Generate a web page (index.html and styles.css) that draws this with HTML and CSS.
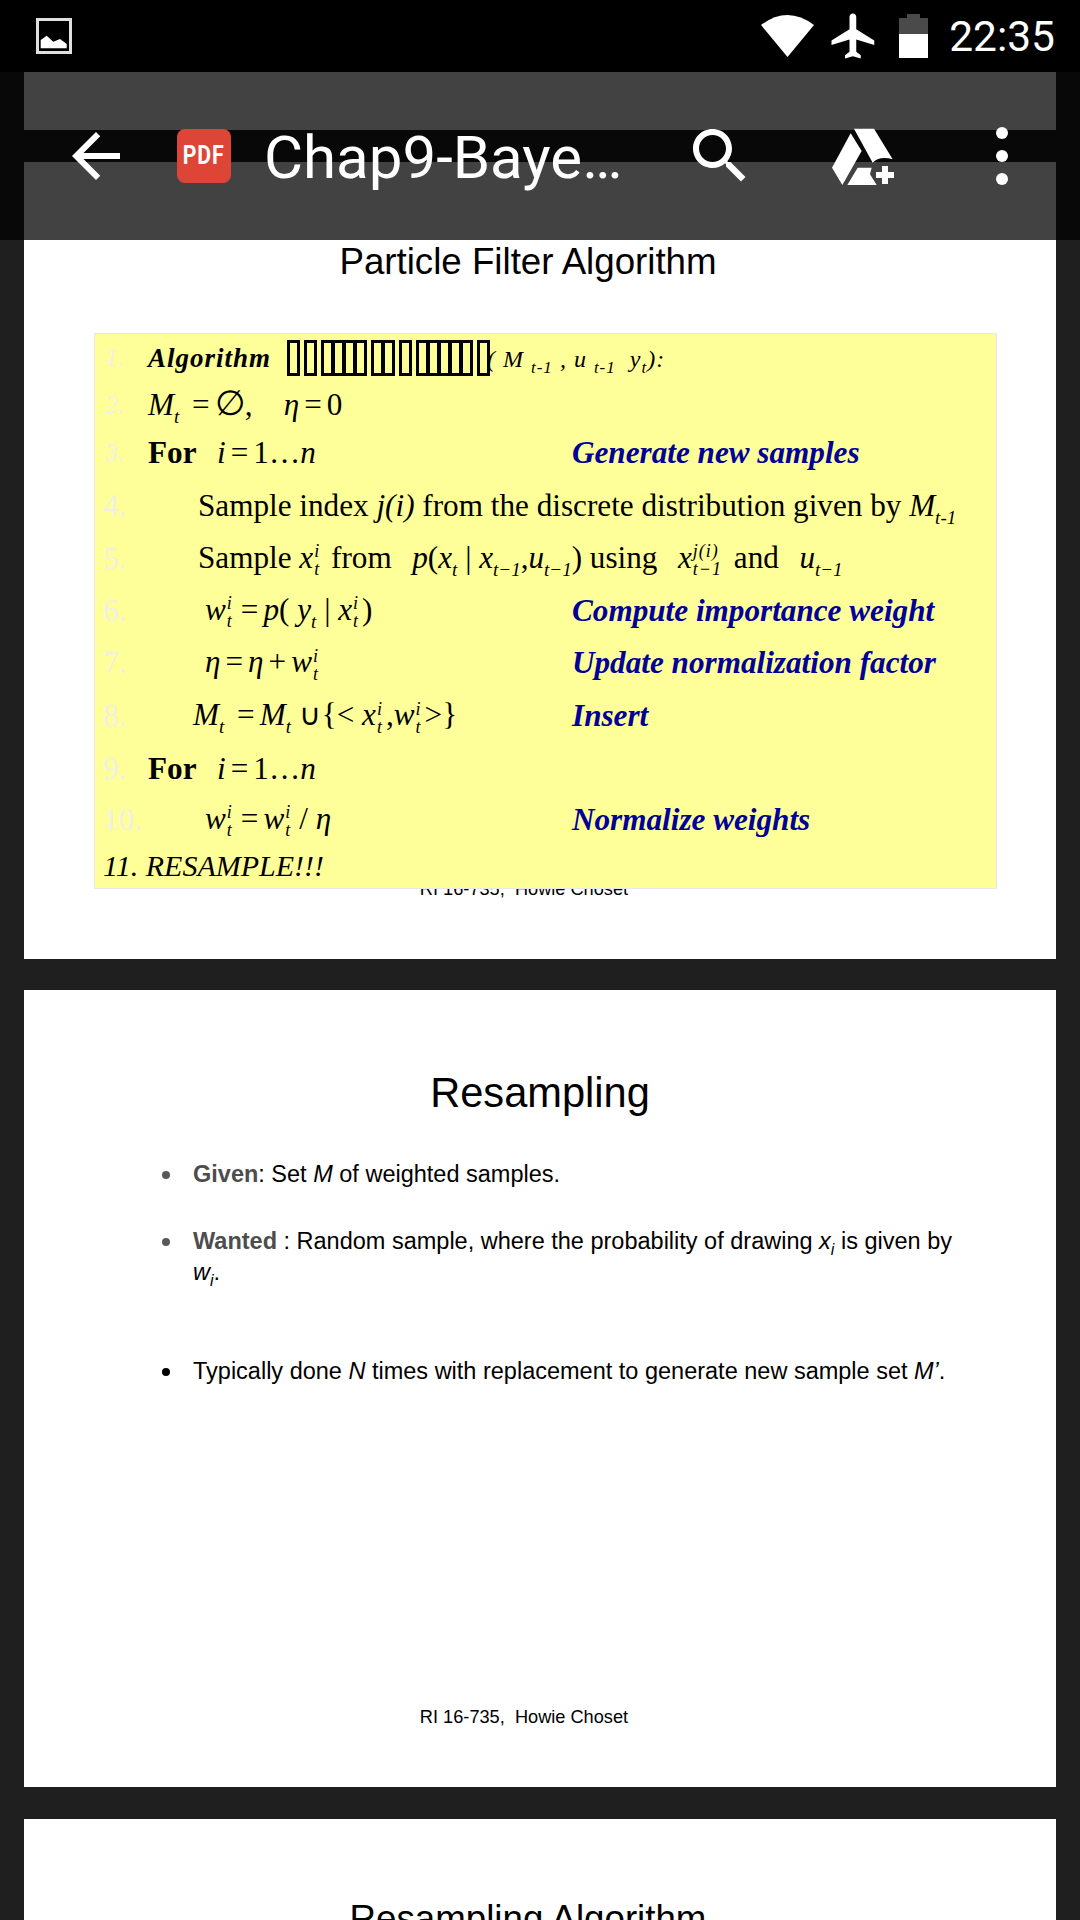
FILE: index.html
```html
<!DOCTYPE html>
<html lang="en">
<head>
    <meta charset="UTF-8">
    <meta name="viewport" content="width=device-width, initial-scale=1.0">
    <title>Chap9-Bayes</title>
    <link rel="stylesheet" href="styles.css">
</head>
<body>
    <div class="viewer">
        <div class="page page-prev"></div>

        <div class="page">
            <h2 class="slide-title slide-title-small">Particle Filter Algorithm</h2>
            <div class="algo">
                <div class="algo-row">
                    <span class="num num-small">1.</span>
                    <div class="expr expr-wide first-line">
                        <span class="script">Algorithm</span>
                        <span class="tofu-run">
                            <span class="tofu-group"><i></i></span>
                            <span class="tofu-group"><i></i></span>
                            <span class="tofu-group"><i></i><i></i><i></i><i></i></span>
                            <span class="tofu-group"><i></i><i></i></span>
                            <span class="tofu-group"><i></i></span>
                            <span class="tofu-group"><i></i><i></i><i></i><i></i><i></i></span>
                            <span class="tofu-group"><i></i></span>
                        </span>
                        <span class="args">( M <sub>t-1</sub> , u <sub>t-1</sub> &nbsp;y<sub>t</sub>):</span>
                    </div>
                </div>
                <div class="algo-row">
                    <span class="num num-small">2.</span>
                    <div class="expr"><em>M</em><sub class="low it">t</sub> <span class="eq">=</span><span class="empty">∅</span>, &nbsp;&nbsp; <em>η</em><span class="eq">=</span>0</div>
                </div>
                <div class="algo-row">
                    <span class="num num-small">3.</span>
                    <div class="expr"><b>For</b> <span class="gap"></span>&nbsp;<em>i</em><span class="eq">=</span>1…<em>n</em></div>
                    <div class="note">Generate new samples</div>
                </div>
                <div class="algo-row">
                    <span class="num">4.</span>
                    <div class="expr expr-wide indent-md">Sample index <em>j(i)</em> from the discrete distribution given by <em>M</em><sub class="low it">t-1</sub></div>
                </div>
                <div class="algo-row">
                    <span class="num">5.</span>
                    <div class="expr expr-wide indent-md">Sample <em>x</em><span class="ss"><span>i</span><span>t</span></span> from &nbsp;<span class="gap"></span><em>p</em>(<em>x</em><sub class="low it">t</sub> | <em>x</em><sub class="low it">t−1</sub>,<em>u</em><sub class="low it">t−1</sub>) using <span class="gap"></span>&nbsp;<em>x</em><span class="ss ss-wide"><span>j(i)</span><span>t−1</span></span> and &nbsp;<span class="gap"></span><em>u</em><sub class="low it">t−1</sub></div>
                </div>
                <div class="algo-row">
                    <span class="num">6.</span>
                    <div class="expr indent-lg"><em>w</em><span class="ss"><span>i</span><span>t</span></span><span class="eq">=</span><em>p</em>( <em>y</em><sub class="low it">t</sub> | <em>x</em><span class="ss"><span>i</span><span>t</span></span>)</div>
                    <div class="note">Compute importance weight</div>
                </div>
                <div class="algo-row">
                    <span class="num">7.</span>
                    <div class="expr indent-lg"><em>η</em><span class="eq">=</span><em>η</em><span class="eq">+</span><em>w</em><span class="ss"><span>i</span><span>t</span></span></div>
                    <div class="note">Update normalization factor</div>
                </div>
                <div class="algo-row">
                    <span class="num">8.</span>
                    <div class="expr indent-sm"><em>M</em><sub class="low it">t</sub> <span class="eq">=</span><em>M</em><sub class="low it">t</sub> <span class="cup">∪</span>{&lt; <em>x</em><span class="ss"><span>i</span><span>t</span></span>,<em>w</em><span class="ss"><span>i</span><span>t</span></span>&gt;}</div>
                    <div class="note">Insert</div>
                </div>
                <div class="algo-row">
                    <span class="num">9.</span>
                    <div class="expr"><b>For</b> <span class="gap"></span>&nbsp;<em>i</em><span class="eq">=</span>1…<em>n</em></div>
                </div>
                <div class="algo-row">
                    <span class="num">10.</span>
                    <div class="expr indent-lg"><em>w</em><span class="ss"><span>i</span><span>t</span></span><span class="eq">=</span><em>w</em><span class="ss"><span>i</span><span>t</span></span><span class="gap"></span>/ <em>η</em></div>
                    <div class="note">Normalize weights</div>
                </div>
                <div class="algo-row">
                    <div class="resample">11. RESAMPLE!!!</div>
                </div>
            </div>
            <div class="slide-footer footer-under">RI 16-735, &nbsp;Howie Choset</div>
        </div>

        <div class="page">
            <h2 class="slide-title">Resampling</h2>
            <ul class="bullets">
                <li class="muted"><span><b>Given</b>: Set <em>M</em> of weighted samples.</span></li>
                <li class="muted"><span><b>Wanted</b> : Random sample, where the probability of drawing <em>x<sub>i</sub></em> is given by <em>w<sub>i</sub></em>.</span></li>
                <li><span>Typically done <em>N</em> times with replacement to generate new sample set <em>M’</em>.</span></li>
            </ul>
            <div class="slide-footer">RI 16-735, &nbsp;Howie Choset</div>
        </div>

        <div class="page">
            <h2 class="slide-title slide-title-small">Resampling Algorithm</h2>
        </div>
    </div>

    <div class="statusbar">
        <svg class="ic-image" width="36" height="36" viewBox="0 0 36 36">
            <rect x="1.5" y="1.5" width="33" height="33" fill="none" stroke="#e0e0e0" stroke-width="3"/>
            <path d="M4.7 30.3V22L10.7 17.7 17.3 23.7 24 21 30.7 26V30.3Z" fill="#fff"/>
        </svg>
        <div class="status-right">
            <svg class="ic-wifi" width="53" height="42" viewBox="0 0 53 42">
                <path d="M0 10Q26.5-10 53 10L26.5 42Z" fill="#fff"/>
            </svg>
            <svg class="ic-plane" width="54" height="54" viewBox="0 0 24 24">
                <path d="M21 16v-2l-8-5V3.5c0-.83-.67-1.5-1.5-1.5S10 2.67 10 3.5V9l-8 5v2l8-2.5V19l-2 1.5V22l3.5-1 3.5 1v-1.5L13 19v-5.5l8 2.5z" fill="#fff"/>
            </svg>
            <svg class="ic-battery" width="29" height="44" viewBox="0 0 29 44">
                <path d="M8 0H21V4H29V20H0V4H8Z" fill="#4a4a4a"/>
                <rect y="20" width="29" height="24" fill="#fff"/>
            </svg>
            <span class="clock">22:35</span>
        </div>
    </div>

    <div class="appbar">
        <svg width="72" height="72" viewBox="0 0 24 24">
            <path d="M20 11H7.83l5.59-5.59L12 4l-8 8 8 8 1.41-1.41L7.83 13H20v-2z" fill="#fff"/>
        </svg>
        <div class="pdf-badge"><span>PDF</span></div>
        <div class="doc-title">Chap9-Baye…</div>
        <svg width="72" height="72" viewBox="0 0 24 24">
            <path d="M15.5 14h-.79l-.28-.27C15.41 12.59 16 11.11 16 9.5 16 5.91 13.09 3 9.5 3S3 5.91 3 9.5 5.91 16 9.5 16c1.61 0 3.09-.59 4.23-1.57l.27.28v.79l5 4.99L20.49 19l-4.99-5zm-6 0C7.01 14 5 11.99 5 9.5S7.01 5 9.5 5 14 7.01 14 9.5 11.99 14 9.5 14z" fill="#fff"/>
        </svg>
        <svg class="ic-drive" width="66" height="60" viewBox="60 30 198 180">
            <path d="M132 38H192L248 130C225 122 200 125 188 140Z" fill="#fff"/>
            <path d="M122 52L155 105 97 207 66 155Z" fill="#fff"/>
            <path d="M143 155H185L180 175 200 207H112Z" fill="#fff"/>
            <path d="M216 150H234V168H252V186H234V204H216V186H198V168H216Z" fill="#fff"/>
        </svg>
        <svg class="ic-more" width="12" height="58" viewBox="0 0 12 58">
            <circle cx="6" cy="6" r="6" fill="#fff"/>
            <circle cx="6" cy="29" r="6" fill="#fff"/>
            <circle cx="6" cy="52" r="6" fill="#fff"/>
        </svg>
    </div>
</body>
</html>
```

FILE: styles.css
```css
body {
    margin: 0;
    height: 1920px;
    overflow: hidden;
    background-color: #1f1f1f;
    font-family: "Liberation Sans", Arial, sans-serif;
}

/* document pages */
.viewer {
    display: flex;
    flex-direction: column;
    gap: 31.6px;
    padding: 0 24px;
}
.page {
    display: flex;
    flex-direction: column;
    flex-shrink: 0;
    height: 797px;
    background-color: #fff;
    color: #000;
}
.page-prev {
    height: 130px;
}
.slide-title {
    margin: 79px 0 0;
    font-size: 41.6px;
    line-height: 48px;
    font-weight: normal;
    text-align: center;
}
.slide-title-small {
    padding-right: 24px;
    font-size: 36.7px;
    line-height: 42px;
}
.slide-footer {
    margin-top: auto;
    padding: 0 32px 60px 0;
    font-size: 18.2px;
    line-height: 20px;
    text-align: center;
    white-space: nowrap;
}
.footer-under {
    margin-top: -10px;
}

/* yellow algorithm box */
.algo {
    position: relative;
    z-index: 1;
    display: grid;
    grid-template-rows: 49px 44px 53px 53px 52px 52px 53px 53px 52px 50px 43px;
    margin: 50.4px 0 0 70px;
    width: 901px;
    border: 1px solid #e8e8e8;
    background-color: #ffff99;
    font-family: "Liberation Serif", "Times New Roman", serif;
    font-size: 31.2px;
}
.algo-row {
    display: grid;
    grid-template-columns: 53px 424px 1fr;
    align-items: center;
    white-space: nowrap;
}
.num {
    padding-left: 8px;
    color: #f0f0e4;
}
.num-small {
    padding-left: 10px;
    font-size: 26px;
    font-style: italic;
}
.expr-wide {
    grid-column: 2 / -1;
}
.indent-sm {
    padding-left: 45px;
}
.indent-md {
    padding-left: 50px;
}
.indent-lg {
    padding-left: 57px;
}
.note {
    color: #000099;
    font-weight: bold;
    font-style: italic;
}
.first-line {
    display: flex;
    align-items: center;
}
.script {
    width: 139px;
    font-weight: bold;
    font-style: italic;
    font-size: 27px;
    letter-spacing: 1px;
}
.tofu-run {
    display: flex;
    gap: 4px;
    width: 200px;
}
.tofu-group {
    display: flex;
}
.tofu-group i {
    box-sizing: border-box;
    width: 13px;
    height: 36px;
    border: 3px solid #000;
}
.tofu-group i + i {
    margin-left: -2px;
}
.args {
    padding-top: 6px;
    font-style: italic;
    font-size: 24px;
    letter-spacing: 1px;
}
.args sub {
    font-size: 17px;
}
.resample {
    grid-column: 1 / -1;
    padding-left: 8px;
    font-style: italic;
    font-size: 30px;
}
.low {
    font-size: 19px;
    line-height: 0;
    vertical-align: -8px;
}
.it {
    font-style: italic;
}
.eq {
    margin: 0 5px;
}
.cup {
    margin-right: 1px;
    font-size: 30px;
    line-height: 0;
}
.empty {
    font-size: 35px;
    line-height: 0;
}
.gap {
    display: inline-block;
    width: 5px;
}
.ss {
    display: inline-flex;
    flex-direction: column;
    vertical-align: middle;
    margin: 0 4px 0 1px;
    font-size: 18px;
    line-height: 18px;
    font-style: italic;
}
.ss-wide {
    margin-right: 4px;
    letter-spacing: 1px;
}

/* bullet list on the second slide */
.bullets {
    margin: 42px 0 0;
    padding: 0 90px 0 138px;
    list-style: none;
    font-size: 23.5px;
    line-height: 31px;
}
.bullets li {
    display: flex;
    align-items: flex-start;
    gap: 23px;
    margin-bottom: 36px;
}
.bullets li:nth-child(2) {
    margin-bottom: 68px;
}
.bullets li::before {
    content: "";
    flex-shrink: 0;
    width: 8px;
    height: 8px;
    margin-top: 12px;
    border-radius: 50%;
    background-color: #000;
}
.bullets .muted::before {
    background-color: #595959;
}
.bullets b {
    color: #4d4d4d;
}
.bullets sub {
    font-size: 16px;
    line-height: 0;
}

/* overlays: status bar and translucent app bar */
.statusbar {
    position: absolute;
    top: 0;
    left: 0;
    right: 0;
    display: flex;
    align-items: center;
    justify-content: space-between;
    height: 72px;
    padding: 0 25px 0 36px;
    box-sizing: border-box;
    background-color: #000;
}
.status-right {
    display: flex;
    align-items: center;
}
.ic-plane {
    margin-left: 13px;
}
.ic-battery {
    margin-left: 18px;
}
.clock {
    margin-left: 21px;
    color: #fff;
    font-family: Roboto, sans-serif;
    font-size: 42.5px;
}
.appbar {
    position: absolute;
    top: 72px;
    left: 0;
    right: 0;
    display: flex;
    align-items: center;
    height: 168px;
    padding-left: 60px;
    background-color: rgba(0, 0, 0, 0.741);
}
.pdf-badge {
    width: 54px;
    height: 54px;
    margin-left: 45px;
    border-radius: 8px;
    background-color: #dd4537;
    color: #fff;
    font-family: Roboto, sans-serif;
    font-size: 25px;
    font-weight: bold;
    line-height: 54px;
    text-align: center;
}
.pdf-badge span {
    display: inline-block;
    transform: scaleX(0.85);
    letter-spacing: 1px;
}
.doc-title {
    width: 420px;
    margin-left: 33px;
    padding-top: 2px;
    color: #fff;
    font-family: Roboto, sans-serif;
    font-size: 60px;
    white-space: nowrap;
}
.ic-drive {
    margin-left: 74px;
}
.ic-more {
    margin-left: 100px;
}
```
